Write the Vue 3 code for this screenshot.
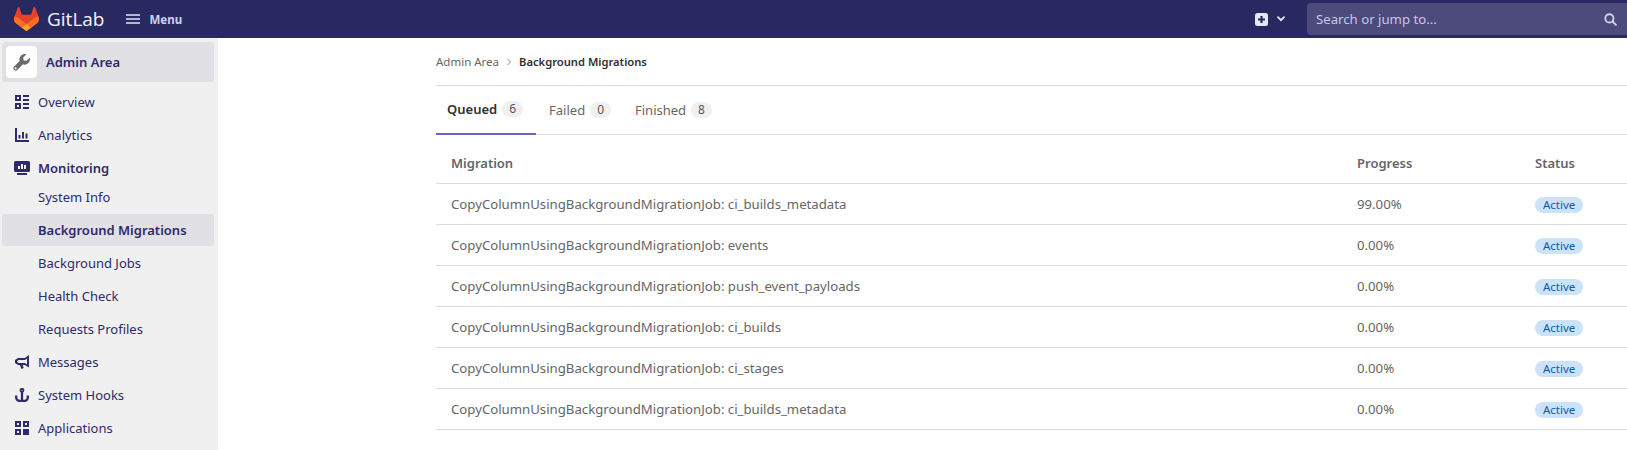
<script setup>
const rows = [
  ['ci_builds_metadata', '99.00%'],
  ['events', '0.00%'],
  ['push_event_payloads', '0.00%'],
  ['ci_builds', '0.00%'],
  ['ci_stages', '0.00%'],
  ['ci_builds_metadata', '0.00%'],
]
const tabs = [
  { name: 'Queued', count: 6, active: true },
  { name: 'Failed', count: 0 },
  { name: 'Finished', count: 8 },
]
</script>

<template>
  <div class="page">
    <header class="navbar">
      <div class="brand">
        <svg class="logo" viewBox="0 0 25 24" width="25" height="24">
          <path d="M24.507 9.5l-.034-.09L21.082.562a.896.896 0 00-1.694.091l-2.29 7.01H7.825L5.535.653a.898.898 0 00-1.694-.09L.451 9.411.416 9.5a6.297 6.297 0 002.09 7.278l.012.01.03.022 5.16 3.867 2.56 1.935 1.554 1.176a1.051 1.051 0 001.268 0l1.555-1.176 2.56-1.935 5.197-3.89.014-.01A6.297 6.297 0 0024.507 9.5z" fill="#E24329"/>
          <path d="M24.507 9.5l-.034-.09a11.44 11.44 0 00-4.56 2.051l-7.447 5.632 4.742 3.584 5.197-3.89.014-.01A6.297 6.297 0 0024.507 9.5z" fill="#FC6D26"/>
          <path d="M7.707 20.677l2.56 1.935 1.555 1.176a1.051 1.051 0 001.268 0l1.555-1.176 2.56-1.935-4.743-3.584-4.755 3.584z" fill="#FCA326"/>
          <path d="M5.01 11.461a11.43 11.43 0 00-4.56-2.05L.416 9.5a6.297 6.297 0 002.09 7.278l.012.01.03.022 5.16 3.867 4.745-3.584-7.444-5.632z" fill="#FC6D26"/>
        </svg>
        <span class="wordmark">GitLab</span>
      </div>
      <div class="menu">
        <svg viewBox="0 0 14 10" width="14" height="10"><path d="M0 1h14M0 5h14M0 9h14" stroke="#e4e4f4" stroke-width="1.6" stroke-linecap="round"/></svg>
        <span>Menu</span>
      </div>
      <div class="spacer"></div>
      <div class="create">
        <svg viewBox="0 0 13 13" width="13" height="13"><rect width="13" height="13" rx="2.5" fill="#e6e6f6"/><path d="M6.5 3v7M3 6.5h7" stroke="#292961" stroke-width="2.2"/></svg>
        <svg viewBox="0 0 8 6" width="8" height="6"><path d="M1 1.2l3 3 3-3" fill="none" stroke="#e6e6f6" stroke-width="1.8" stroke-linecap="round"/></svg>
      </div>
      <div class="search">
        <span>Search or jump to...</span>
        <svg viewBox="0 0 14 14" width="13" height="13"><circle cx="5.8" cy="5.8" r="4.4" fill="none" stroke="#cfcfe6" stroke-width="2"/><path d="M9.2 9.2l3.6 3.6" stroke="#cfcfe6" stroke-width="2.2" stroke-linecap="round"/></svg>
      </div>
    </header>

    <div class="body">
      <aside class="sidebar">
        <div class="context">
          <span class="avatar">
            <svg viewBox="0 0 16 16" width="17" height="17"><path fill="#6a6a6a" fill-rule="evenodd" d="M15.700 3.500 12.700 6.400 10 6 9.600 3.300 12.600.3A5 5 0 0 0 6.300 6.700L.9 12A2.200 2.200 0 0 0 4 15.100L9.300 9.700A5 5 0 0 0 15.700 3.500zM2.500 12.500a1 1 0 1 1 0 2 1 1 0 0 1 0-2z"/></svg>
          </span>
          <span>Admin Area</span>
        </div>
        <nav class="nav">
          <a class="item">
            <svg viewBox="0 0 14 14" width="14" height="14"><path fill="#2f2a6b" fill-rule="evenodd" d="M0 0h6v6H0zM2 2v2h2V2zM0 8h6v6H0zM2 10v2h2v-2z"/><path stroke="#2f2a6b" stroke-width="2" d="M8 1h6M8 5h6M8 9h6M8 13h6"/></svg>
            <span>Overview</span>
          </a>
          <a class="item">
            <svg viewBox="0 0 14 14" width="14" height="14"><path d="M1 0v13h13" fill="none" stroke="#2f2a6b" stroke-width="2"/><path d="M4.5 7v3.5M8 4v6.5M11.5 5.5v5" stroke="#2f2a6b" stroke-width="2"/></svg>
            <span>Analytics</span>
          </a>
          <a class="item parent">
            <svg viewBox="0 0 16 14" width="16" height="14" class="wide"><path fill="#2f2a6b" fill-rule="evenodd" d="M1.5 0h13A1.5 1.5 0 0 1 16 1.5v8a1.5 1.5 0 0 1-1.5 1.5h-13A1.5 1.5 0 0 1 0 9.500v-8A1.500 1.500 0 0 1 1.500 0zM4 5v3h2V5zM7 3v5h2V3zM10 4v4h2V4z"/><path stroke="#2f2a6b" stroke-width="2" d="M3 13h10"/></svg>
            <span>Monitoring</span>
          </a>
          <a class="sub first">System Info</a>
          <a class="sub active">Background Migrations</a>
          <a class="sub">Background Jobs</a>
          <a class="sub">Health Check</a>
          <a class="sub">Requests Profiles</a>
          <a class="item">
            <svg viewBox="0 0 14 14" width="14" height="14"><path fill="#2f2a6b" fill-rule="evenodd" d="M14 0v12.500L9.800 10H7.700l1 3-2.300 1-1.500-4H3L0 8V5l3-2h6.800zM12 3.500L10 5H3.800L2 6v1l1.800 1H10l2 1.500z"/></svg>
            <span>Messages</span>
          </a>
          <a class="item">
            <svg viewBox="0 0 14 14" width="14" height="14"><circle cx="7" cy="2.300" r="1.500" fill="none" stroke="#2f2a6b" stroke-width="1.800"/><path d="M7 4v9M1.200 7.500v2A3.500 3.500 0 0 0 4.700 13h4.600a3.500 3.500 0 0 0 3.500-3.500v-2" fill="none" stroke="#2f2a6b" stroke-width="2.300"/></svg>
            <span>System Hooks</span>
          </a>
          <a class="item">
            <svg viewBox="0 0 14 14" width="14" height="14"><path fill="#2f2a6b" fill-rule="evenodd" d="M0 0h6v6H0zM2 2v2h2V2zM8 0h6v6H8zM10 2v2h2V2zM0 8h6v6H0zM2 10v2h2v-2zM8 8h6v6H8z"/></svg>
            <span>Applications</span>
          </a>
        </nav>
      </aside>

      <main class="content">
        <div class="crumbs">
          <span>Admin Area</span>
          <svg viewBox="0 0 6 8" width="6" height="8"><path d="M1.500 1l3 3-3 3" fill="none" stroke="#888" stroke-width="1"/></svg>
          <b>Background Migrations</b>
        </div>
        <ul class="tabs">
          <li v-for="t in tabs" :key="t.name" :class="{ on: t.active }">
            <span>{{ t.name }}</span><em>{{ t.count }}</em>
          </li>
        </ul>
        <table>
          <thead>
            <tr><th>Migration</th><th>Progress</th><th>Status</th></tr>
          </thead>
          <tbody>
            <tr v-for="(r, i) in rows" :key="i">
              <td>CopyColumnUsingBackgroundMigrationJob: {{ r[0] }}</td>
              <td>{{ r[1] }}</td>
              <td><span class="pill">Active</span></td>
            </tr>
          </tbody>
        </table>
      </main>
    </div>
  </div>
</template>

<style>
html, body { margin: 0; overflow: hidden; }
</style>

<style scoped>
.page { width: 1627px; height: 450px; overflow: hidden; font-family: "Noto Sans", "Open Sans", sans-serif; font-size: 13px; color: #666; background: #fff; }
.navbar { height: 38px; background: #292961; display: flex; align-items: center; }
.brand { display: flex; align-items: center; margin-left: 14px; }
.logo { display: block; }
.wordmark { margin-left: 8px; font-size: 19px; color: #f4f4fa; font-family: "Open Sans", sans-serif; }
.menu { display: flex; align-items: center; margin-left: 22px; color: #d1d0f0; font-weight: 700; font-size: 11.5px; }
.menu span { margin-left: 9px; }
.spacer { flex: 1; }
.create { display: flex; align-items: center; gap: 9px; margin-right: 22px; }
.search { width: 320px; height: 32px; box-sizing: border-box; background: #4c4b7c; border-radius: 4px 0 0 4px; display: flex; align-items: center; justify-content: space-between; padding: 0 10px 0 9px; color: #c6c6e6; font-size: 13.2px; }
.body { display: flex; }
.sidebar { width: 218px; height: 412px; flex: none; background: #f0f0f0; padding: 4px 4px 0 2px; box-sizing: border-box; color: #2f2a6b; }
.context { height: 40px; background: #e1e0e5; border-radius: 4px; display: flex; align-items: center; padding-left: 4px; font-weight: 600; }
.avatar { width: 31px; height: 32px; background: #fff; border-radius: 4px; display: flex; align-items: center; justify-content: center; margin-right: 9px; }
.nav { display: flex; flex-direction: column; margin-top: 3px; }
.item { height: 33px; display: flex; align-items: center; padding-left: 13px; }
.item svg { margin-right: 9px; flex: none; }
.item svg.wide { margin-left: -1px; margin-right: 8px; }
.parent { font-weight: 600; }
.sub { height: 33px; flex: none; display: flex; align-items: center; padding-left: 36px; border-radius: 4px; }
.sub.first { height: 25px; }
.sub.active { background: #e1e0e5; font-weight: 600; height: 32px; margin-top: 5px; }
.content { flex: 1; padding-left: 218px; min-width: 0; }
.crumbs { height: 47px; border-bottom: 1px solid #dbdbdb; display: flex; align-items: center; font-size: 11.5px; color: #666; }
.crumbs svg { margin: 0 7px; }
.crumbs b { font-weight: 600; color: #303030; font-size: 11.2px; }
.tabs { list-style: none; margin: 0; padding: 0; display: flex; height: 49px; box-sizing: border-box; border-bottom: 1px solid #dbdbdb; }
.tabs li { display: flex; align-items: center; height: 48px; box-sizing: border-box; padding: 0 12px; color: #666; }
.tabs li.on { height: 49px; padding: 0 13px 2px 11px; color: #303030; font-weight: 600; border-bottom: 2px solid #6666c4; }
.tabs li.on + li { padding-left: 13px; }
.tabs em { font-style: normal; font-weight: 400; font-size: 12px; background: #f0f0f0; color: #555; border-radius: 10px; height: 16px; line-height: 16px; padding: 0 7px; margin-left: 5px; }
table { width: 100%; border-collapse: collapse; table-layout: fixed; }
th { text-align: left; font-weight: 600; color: #666; height: 48px; padding: 8px 15px 0; border-bottom: 1px solid #dbdbdb; box-sizing: border-box; }
th:nth-child(2) { width: 178px; }
th:nth-child(3) { width: 107px; }
td { height: 41px; padding: 0 15px; border-bottom: 1px solid #dbdbdb; box-sizing: border-box; font-size: 13.2px; }
.pill { display: inline-block; height: 16px; line-height: 16px; padding: 0 8px; border-radius: 8px; background: #cbe2f9; color: #0b5cad; font-size: 11.5px; }
</style>
